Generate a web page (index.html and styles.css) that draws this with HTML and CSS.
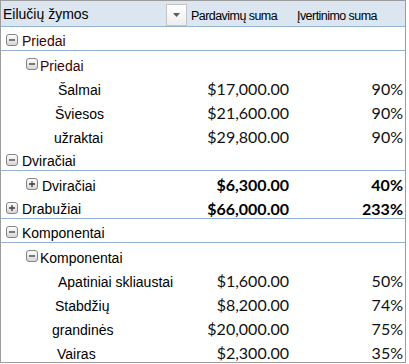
FILE: index.html
```html
<!DOCTYPE html>
<html lang="lt">
<head>
<meta charset="utf-8">
<link rel="stylesheet" href="styles.css">
</head>
<body>
<div class="pivot">
  <div class="row head">
    <div class="lab hlab"><span>Eilučių žymos</span><span class="dd"><svg width="7" height="4" viewBox="0 0 7 4"><path d="M0 0H7L3.5 4Z" fill="#5a5a5a"/></svg></span></div>
    <div class="num htxt">Pardavimų suma</div>
    <div class="num htxt pct">Įvertinimo suma</div>
  </div>

  <div class="row line">
    <div class="lab l1 red"><svg class="tg" viewBox="0 0 12 12"><rect x="0.5" y="0.5" width="11" height="11" rx="2.5" class="bx"/><path d="M3 6H9" class="sg"/></svg>Priedai</div>
    <div class="num"></div><div class="num pct"></div>
  </div>
  <div class="row">
    <div class="lab l2 red"><svg class="tg" viewBox="0 0 12 12"><rect x="0.5" y="0.5" width="11" height="11" rx="2.5" class="bx"/><path d="M3 6H9" class="sg"/></svg>Priedai</div>
    <div class="num"></div><div class="num pct"></div>
  </div>
  <div class="row">
    <div class="lab i58">Šalmai</div>
    <div class="num">$17,000.00</div><div class="num pct">90%</div>
  </div>
  <div class="row">
    <div class="lab i55">Šviesos</div>
    <div class="num">$21,600.00</div><div class="num pct">90%</div>
  </div>
  <div class="row">
    <div class="lab i54">užraktai</div>
    <div class="num">$29,800.00</div><div class="num pct">90%</div>
  </div>
  <div class="row line">
    <div class="lab l1"><svg class="tg" viewBox="0 0 12 12"><rect x="0.5" y="0.5" width="11" height="11" rx="2.5" class="bx"/><path d="M3 6H9" class="sg"/></svg>Dviračiai</div>
    <div class="num"></div><div class="num pct"></div>
  </div>
  <div class="row">
    <div class="lab l2 wide"><svg class="tg" viewBox="0 0 12 12"><rect x="0.5" y="0.5" width="11" height="11" rx="2.5" class="bx"/><path d="M3 6H9M6 3V9" class="sg"/></svg>Dviračiai</div>
    <div class="num b">$6,300.00</div><div class="num pct b">40%</div>
  </div>
  <div class="row line">
    <div class="lab l1"><svg class="tg" viewBox="0 0 12 12"><rect x="0.5" y="0.5" width="11" height="11" rx="2.5" class="bx"/><path d="M3 6H9M6 3V9" class="sg"/></svg>Drabužiai</div>
    <div class="num b">$66,000.00</div><div class="num pct b">233%</div>
  </div>
  <div class="row line">
    <div class="lab l1"><svg class="tg" viewBox="0 0 12 12"><rect x="0.5" y="0.5" width="11" height="11" rx="2.5" class="bx"/><path d="M3 6H9" class="sg"/></svg>Komponentai</div>
    <div class="num"></div><div class="num pct"></div>
  </div>
  <div class="row">
    <div class="lab l2"><svg class="tg" viewBox="0 0 12 12"><rect x="0.5" y="0.5" width="11" height="11" rx="2.5" class="bx"/><path d="M3 6H9" class="sg"/></svg>Komponentai</div>
    <div class="num"></div><div class="num pct"></div>
  </div>
  <div class="row">
    <div class="lab i58">Apatiniai skliaustai</div>
    <div class="num">$1,600.00</div><div class="num pct">50%</div>
  </div>
  <div class="row">
    <div class="lab i55">Stabdžių</div>
    <div class="num">$8,200.00</div><div class="num pct">74%</div>
  </div>
  <div class="row">
    <div class="lab i52">grandinės</div>
    <div class="num">$20,000.00</div><div class="num pct">75%</div>
  </div>
  <div class="row">
    <div class="lab i57">Vairas</div>
    <div class="num">$2,300.00</div><div class="num pct">35%</div>
  </div>
</div>
<svg width="0" height="0" class="defs" aria-hidden="true">
  <defs>
    <linearGradient id="tgfill" x1="0" y1="0" x2="0" y2="1">
      <stop offset="0" stop-color="#ffffff"/>
      <stop offset="1" stop-color="#d4d4d4"/>
    </linearGradient>
  </defs>
</svg>
</body>
</html>
```

FILE: styles.css
```css
html, body {
  margin: 0;
  padding: 0;
  background: #ffffff;
}

.defs {
  position: absolute;
  width: 0;
  height: 0;
}

.pivot {
  width: 406px;
  height: 363px;
  box-sizing: border-box;
  border: 1px solid #9c9c9c;
  overflow: hidden;
  background: #ffffff;
}

.row {
  display: grid;
  grid-template-columns: 189px 103px 112px;
  height: 24px;
  box-sizing: border-box;
}

.row.line {
  border-bottom: 1px solid #95b3d7;
}

.row.head {
  height: 26px;
  background: #dce6f1;
  border-bottom: 1px solid #95b3d7;
}

.lab {
  display: flex;
  align-items: center;
  padding-top: 5px;
  box-sizing: border-box;
  font-family: "Liberation Sans", Arial, sans-serif;
  font-size: 14px;
  line-height: 18px;
  color: #000000;
  white-space: nowrap;
}

.hlab {
  padding-left: 2px;
  padding-right: 3px;
  padding-top: 0;
  justify-content: space-between;
  align-items: center;
}

.dd {
  width: 21px;
  height: 22px;
  box-sizing: border-box;
  border: 1px solid #c3c3c3;
  background: linear-gradient(#ffffff, #eeeeee);
  display: flex;
  align-items: center;
  justify-content: center;
  margin-top: 2px;
}

.num {
  font-family: Lato, "Open Sans", sans-serif;
  font-size: 16px;
  line-height: 18px;
  padding-top: 5px;
  padding-right: 4px;
  text-align: right;
  color: #111111;
  white-space: nowrap;
}

.num.pct {
  padding-right: 2px;
}

.num.b {
  font-weight: 700;
  color: #000000;
}

.num.htxt {
  font-family: "Liberation Sans", Arial, sans-serif;
  font-size: 12.5px;
  letter-spacing: -0.55px;
  text-align: left;
  padding-left: 1px;
  padding-right: 0;
  padding-top: 6px;
  color: #000000;
}

.num.htxt.pct {
  padding-left: 4px;
}

.red {
  color: #3a0505;
}

.tg {
  width: 12px;
  height: 12px;
  flex: none;
  margin-right: 4px;
  margin-top: -3px;
}

.bx {
  fill: url(#tgfill);
  stroke: #858585;
  stroke-width: 1;
}

.sg {
  stroke: #3c3c3c;
  stroke-width: 1.3;
  fill: none;
}

.l1 { padding-left: 5px; }
.l2 { padding-left: 25px; }
.l2 .tg { margin-right: 2px; }
.l2.wide .tg { margin-right: 4px; }

.i58 { padding-left: 57px; }
.i57 { padding-left: 56px; }
.i55 { padding-left: 54px; }
.i54 { padding-left: 53px; }
.i52 { padding-left: 51px; }
```
